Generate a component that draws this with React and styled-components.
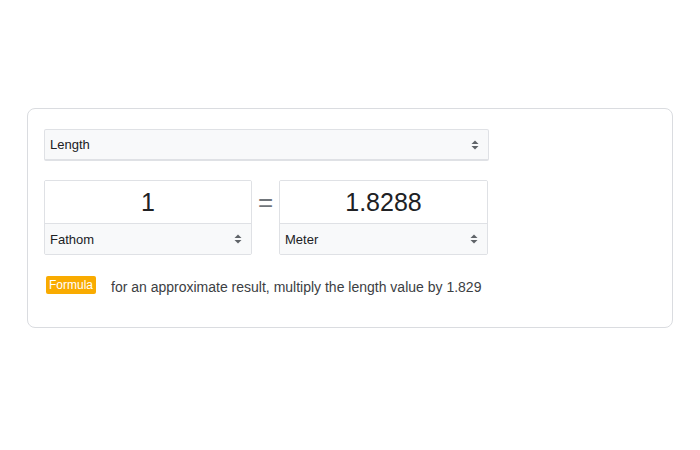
import React from "react";
import styled, { createGlobalStyle } from "styled-components";

const Global = createGlobalStyle`
  html, body { margin: 0; padding: 0; background: #fff; }
  body { font-family: "Liberation Sans", Arial, sans-serif; }
`;

const Page = styled.div`
  width: 700px;
  height: 450px;
  box-sizing: border-box;
  padding: 108px 27px 0 27px;
`;

const Card = styled.div`
  box-sizing: border-box;
  width: 646px;
  height: 220px;
  border: 1px solid #dadce0;
  border-radius: 8px;
  padding: 20px 16px;
  display: flex;
  flex-direction: column;
`;

const Arrows = () => (
  <svg width="8" height="10" viewBox="0 0 8 10">
    <path d="M0.5 4 L4 0.5 L7.5 4 Z" fill="#5f6368" />
    <path d="M0.5 6 L4 9.5 L7.5 6 Z" fill="#5f6368" />
  </svg>
);

const Select = styled.div`
  box-sizing: border-box;
  display: flex;
  align-items: center;
  justify-content: space-between;
  background: #f8f9fa;
  color: #202124;
  font-size: 13px;
  padding: 0 9px 0 5px;
  width: ${(p) => p.$width || "auto"};
  height: ${(p) => p.$height || "31px"};
  border: ${(p) => (p.$bordered ? "1px solid #dfe1e5" : "none")};
  border-bottom-width: ${(p) => (p.$bordered ? "2px" : "0")};
  border-top: 1px solid #dfe1e5;
  border-radius: ${(p) => (p.$bordered ? "2px" : "0")};
`;

const ConvRow = styled.div`
  display: flex;
  align-items: flex-start;
  margin-top: 19px;
`;

const UnitBox = styled.div`
  box-sizing: border-box;
  width: ${(p) => p.$width};
  border: 1px solid #dfe1e5;
  border-radius: 2px;
  display: flex;
  flex-direction: column;
  overflow: hidden;
`;

const Value = styled.div`
  height: 42px;
  display: flex;
  align-items: center;
  justify-content: center;
  font-size: 25px;
  color: #202124;
  background: #fff;
`;

const Equals = styled.div`
  width: 27px;
  height: 44px;
  display: flex;
  align-items: center;
  justify-content: center;
  font-size: 26px;
  color: #70757a;
`;

const FormulaRow = styled.div`
  display: flex;
  align-items: center;
  margin-top: 20px;
  margin-left: 2px;
`;

const Badge = styled.span`
  box-sizing: border-box;
  background: #f9ab00;
  color: #fff;
  font-size: 12px;
  height: 18px;
  width: 50px;
  display: inline-flex;
  align-items: center;
  justify-content: center;
  border-radius: 2px;
`;

const FormulaText = styled.span`
  margin-left: 15px;
  font-size: 14px;
  color: #3c4043;
  padding-top: 4px;
`;

export default function App() {
  return (
    <>
      <Global />
      <Page>
        <Card>
          <Select $bordered $width="445px" $height="32px">
            <span>Length</span>
            <Arrows />
          </Select>
          <ConvRow>
            <UnitBox $width="208px">
              <Value>1</Value>
              <Select>
                <span>Fathom</span>
                <Arrows />
              </Select>
            </UnitBox>
            <Equals>=</Equals>
            <UnitBox $width="209px">
              <Value>1.8288</Value>
              <Select>
                <span>Meter</span>
                <Arrows />
              </Select>
            </UnitBox>
          </ConvRow>
          <FormulaRow>
            <Badge>Formula</Badge>
            <FormulaText>
              for an approximate result, multiply the length value by 1.829
            </FormulaText>
          </FormulaRow>
        </Card>
      </Page>
    </>
  );
}
